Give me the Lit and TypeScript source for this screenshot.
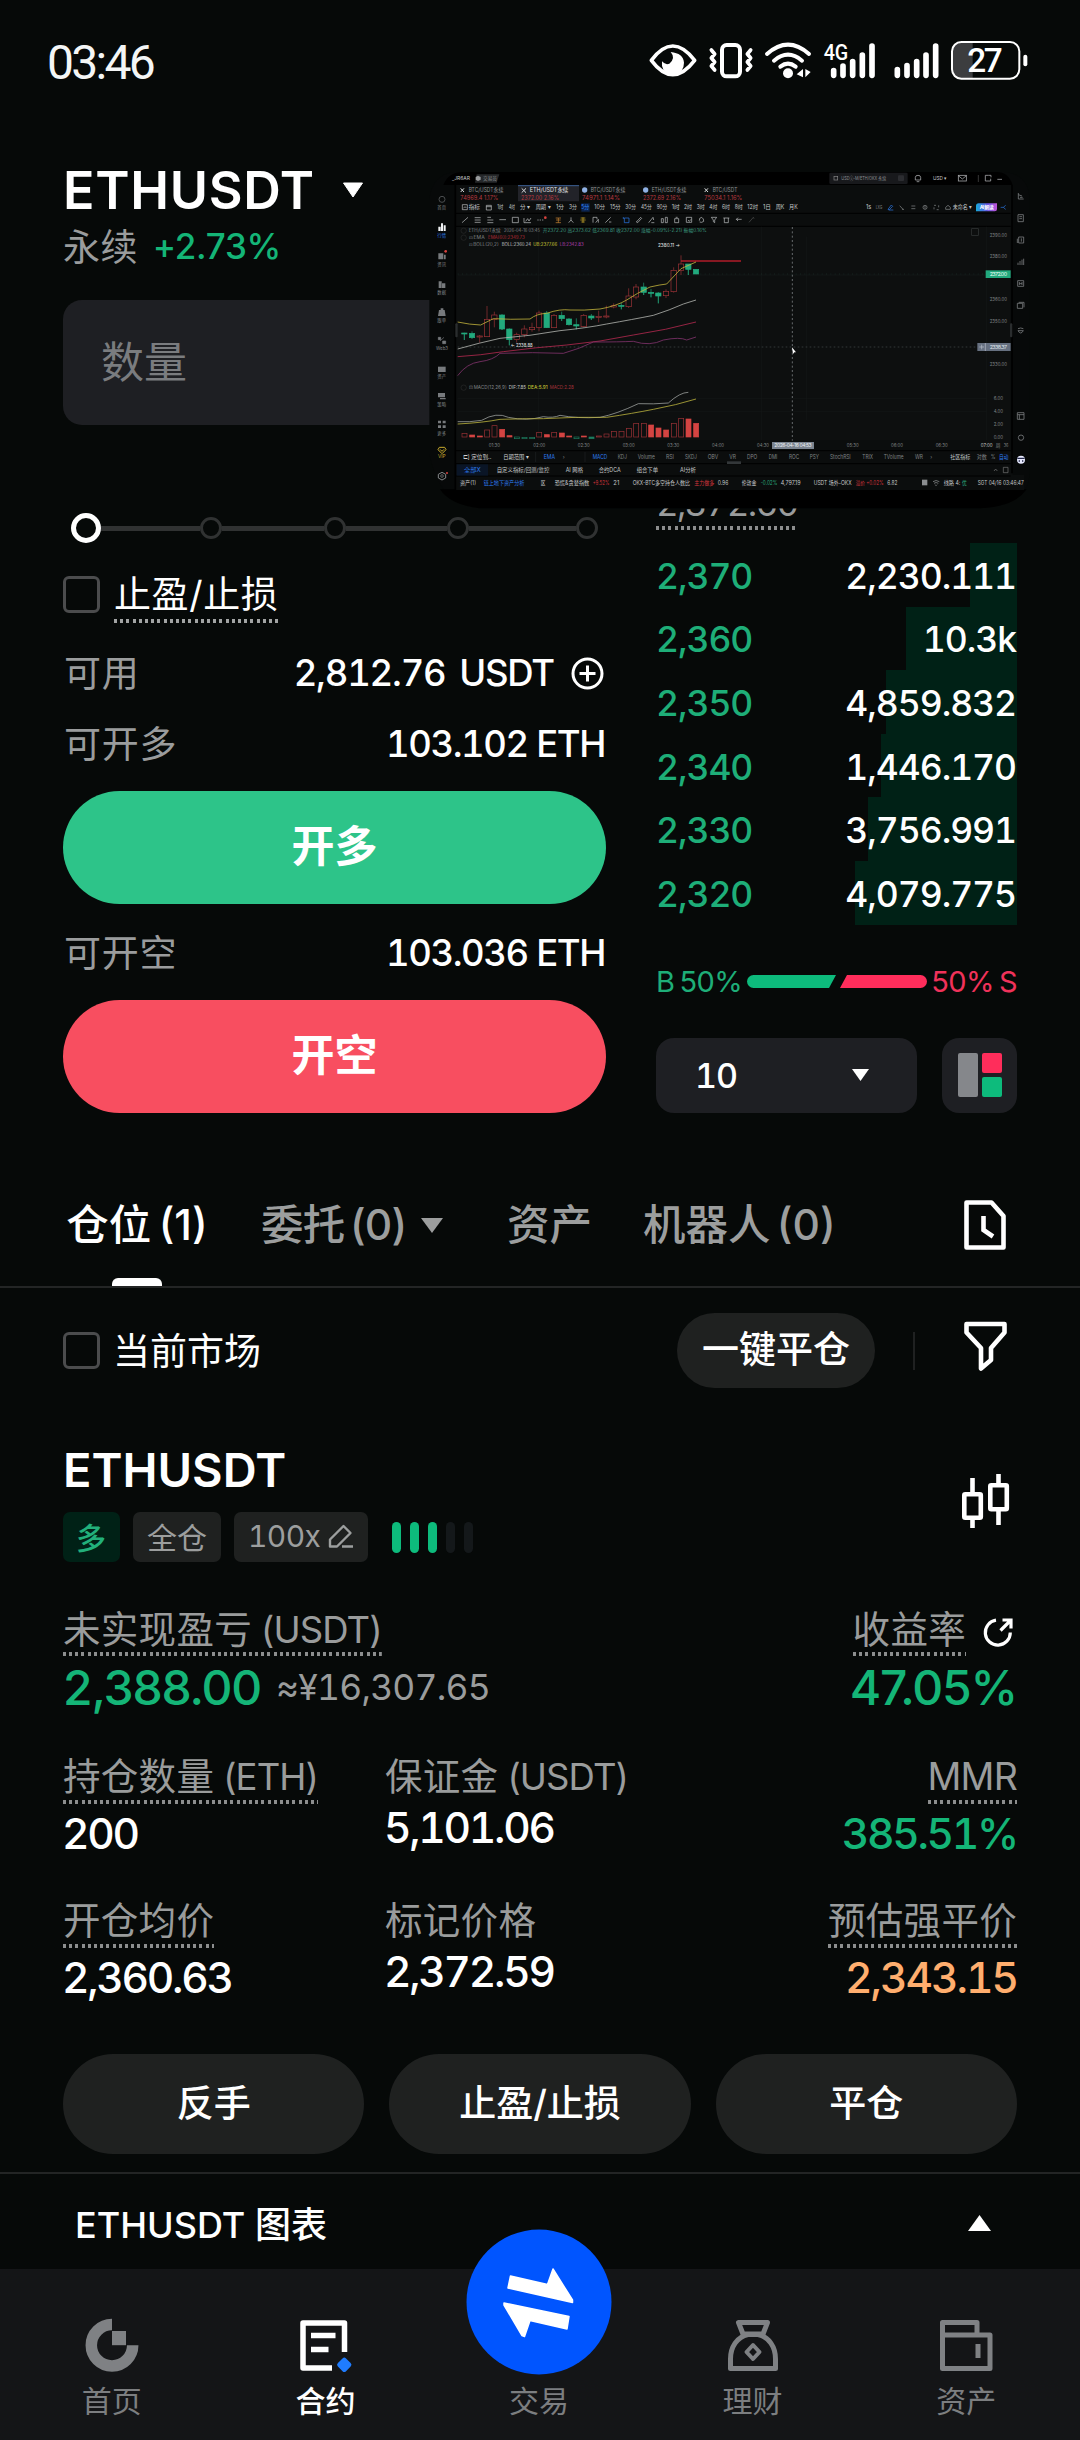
import { LitElement, html, css, svg } from "lit";
import { customElement, property } from "lit/decorators.js";

type Tiny = [number, number, string, string, number, number?];

/* Floating chart window: coordinates are in thirds of a pixel. */
const RED = "#b8383f";
const GREEN = "#2aa87c";
const GREY = "#808486";
const LIGHT = "#c4c7c8";
const BLUE = "#2c7cf0";

const TINY: Tiny[] = [
  [96, 55, "_JR6AR", LIGHT, 54, 15],
  [189, 55, "交易员", "#888b8d", 42, 15],
  [146, 91, "BTC/USDT永续", "#909394", 104],
  [329, 91, "ETH/USDT永续", "#e2e4e6", 116],
  [512, 91, "BTC/USDT永续", "#909394", 104],
  [695, 91, "ETH/USDT永续", "#909394", 104],
  [878, 91, "BTC/USDT", "#909394", 74],
  [121, 113, "74969.4 1.17%", RED, 114],
  [303, 113, "2372.00 2.16%", RED, 114],
  [486, 113, "74971.1 1.14%", RED, 114],
  [669, 113, "2372.69 2.16%", RED, 114],
  [853, 113, "75034.1 1.16%", RED, 114],
  [146, 142, "指标", LIGHT, 34],
  [232, 142, "1时", LIGHT, 18],
  [267, 142, "4时", LIGHT, 18],
  [300, 142, "分 ▾", LIGHT, 30],
  [347, 142, "周期 ▾", LIGHT, 44],
  [408, 142, "1分", LIGHT, 24],
  [447, 142, "3分", LIGHT, 24],
  [484, 142, "5分", "#2f86ff", 24],
  [523, 142, "10分", LIGHT, 32],
  [570, 142, "15分", LIGHT, 32],
  [616, 142, "30分", LIGHT, 32],
  [663, 142, "45分", LIGHT, 32],
  [710, 142, "90分", LIGHT, 32],
  [755, 142, "1时", LIGHT, 24],
  [792, 142, "2时", LIGHT, 24],
  [830, 142, "3时", LIGHT, 24],
  [868, 142, "4时", LIGHT, 24],
  [906, 142, "6时", LIGHT, 24],
  [944, 142, "8时", LIGHT, 24],
  [982, 142, "12时", LIGHT, 32],
  [1029, 142, "1日", LIGHT, 24],
  [1067, 142, "周K", LIGHT, 26],
  [1107, 142, "月K", LIGHT, 26],
  [1338, 142, "1s", LIGHT, 16],
  [1367, 142, "LXG", GREY, 20, 14],
  [1598, 142, "未命名 ▾", LIGHT, 58],
  [146, 212, "ETH/USDT永续", GREY, 96, 13],
  [252, 212, "2026-04-16 03:45", GREY, 108, 13],
  [368, 212, "开2372.20 高2373.62 低2369.81 收2372.00 涨幅-0.09%(-2.21) 振幅0.16%", "#3c9a80", 492, 13],
  [146, 233, "⊡ EMA", GREY, 48, 13],
  [204, 233, "EMA(60):2349.73", "#b02a34", 110, 13],
  [146, 254, "⊡ BOLL(20,2)", GREY, 90, 13],
  [245, 254, "BOLL:2360.24", LIGHT, 88, 13],
  [340, 254, "UB:2377.66", "#d3d038", 72, 13],
  [419, 254, "LB:2342.83", "#b13fb3", 72, 13],
  [714, 257, "2380.11 →", "#e4e6e6", 66, 15],
  [272, 556, "← 2338.88", "#e4e6e6", 66, 15],
  [146, 682, "⊡ MACD(12,26,9)", GREY, 114, 15],
  [266, 682, "DIF:7.85", LIGHT, 52, 15],
  [323, 682, "DEA:5.91", "#d3d038", 60, 15],
  [389, 682, "MACD:2.28", "#a3323a", 72, 15],
  [206, 856, "01:30", GREY, 34, 15],
  [340, 856, "02:00", GREY, 36, 15],
  [473, 856, "02:30", GREY, 36, 15],
  [608, 856, "03:00", GREY, 36, 15],
  [742, 856, "03:30", GREY, 36, 15],
  [876, 856, "04:00", GREY, 36, 15],
  [1011, 856, "04:30", GREY, 36, 15],
  [1280, 856, "05:30", GREY, 36, 15],
  [1413, 856, "06:00", GREY, 36, 15],
  [1547, 856, "06:30", GREY, 36, 15],
  [1682, 856, "07:00", LIGHT, 36, 15],
  [1727, 856, "周", GREY, 14, 14],
  [1751, 856, "36", GREY, 14, 14],
  [128, 890, "⊏] 定位到..", "#d0d2d3", 86],
  [250, 890, "日期范围 ▾", "#d0d2d3", 76],
  [371, 890, "EMA", BLUE, 34],
  [428, 890, "›", GREY, 6],
  [518, 890, "MACD", BLUE, 44],
  [593, 890, "KDJ", GREY, 28],
  [653, 890, "Volume", GREY, 52],
  [738, 890, "RSI", GREY, 24],
  [795, 890, "SKDJ", GREY, 36],
  [863, 890, "OBV", GREY, 32],
  [928, 890, "VR", GREY, 20],
  [981, 890, "DPO", GREY, 31],
  [1046, 890, "DMI", GREY, 26],
  [1107, 890, "ROC", GREY, 31],
  [1169, 890, "PSY", GREY, 28],
  [1230, 890, "StochRSI", GREY, 62],
  [1327, 890, "TRIX", GREY, 32],
  [1391, 890, "TVolume", GREY, 60],
  [1485, 890, "WR", GREY, 24],
  [1531, 890, "›", GREY, 6],
  [1591, 890, "社区指标", LIGHT, 60],
  [1670, 890, "对数", GREY, 30],
  [1712, 890, "%", GREY, 14],
  [1737, 890, "自动", BLUE, 28],
  [132, 930, "全部X", BLUE, 50],
  [230, 930, "自定义指标/回测/监控", LIGHT, 158],
  [437, 930, "AI 网格", LIGHT, 52],
  [536, 930, "合约DCA", LIGHT, 66],
  [650, 930, "组合下单", LIGHT, 64],
  [780, 930, "AI分析", LIGHT, 48],
  [120, 968, "资产(1)", LIGHT, 48],
  [191, 968, "链上地下资产分析", BLUE, 122],
  [362, 968, "区", LIGHT, 14],
  [404, 968, "恐慌&贪婪指数", LIGHT, 104],
  [518, 968, "+9.52%", "#d1343c", 50],
  [580, 968, "21", LIGHT, 18],
  [638, 968, "OKX-BTC多空持仓人数比", LIGHT, 172],
  [823, 968, "主力做多", "#d1343c", 60],
  [893, 968, "0.96", LIGHT, 32],
  [965, 968, "伦敦金", LIGHT, 44],
  [1022, 968, "-0.02%", GREEN, 50],
  [1082, 968, "4,797.19", LIGHT, 60],
  [1181, 968, "USDT 场外-OKX", LIGHT, 114],
  [1307, 968, "溢价 +0.02%", "#d1343c", 84],
  [1402, 968, "6.82", LIGHT, 30],
  [1571, 968, "线路 4:", LIGHT, 50],
  [1626, 968, "优", GREEN, 14],
  [1673, 968, "SGT 04/16 03:46:47", LIGHT, 138],
  [1264, 55, "USDⓢ-M/ETH/OKX 永续", "#8b8e91", 134, 15],
  [1539, 55, "USD ▾", LIGHT, 42, 15],
  [1709, 225, "2390.00", GREY, 52, 15],
  [1709, 290, "2380.00", GREY, 52, 15],
  [1709, 419, "2360.00", GREY, 52, 15],
  [1709, 485, "2350.00", GREY, 52, 15],
  [1709, 614, "2330.00", GREY, 52, 15],
  [1721, 715, "6.00", GREY, 28, 15],
  [1721, 754, "4.00", GREY, 28, 15],
  [1721, 793, "2.00", GREY, 28, 15],
  [1721, 831, "0.00", GREY, 28, 15],
  [52, 142, "首页", GREY, 26, 14],
  [52, 227, "行情", BLUE, 26, 14],
  [52, 312, "资讯", GREY, 26, 14],
  [52, 396, "数据", GREY, 26, 14],
  [52, 480, "跟单", GREY, 26, 14],
  [48, 565, "Web3", GREY, 36, 14],
  [52, 649, "资产", GREY, 26, 14],
  [52, 733, "策略", GREY, 26, 14],
  [52, 820, "更多", GREY, 26, 14],
  [54, 889, "VIP", "#c9ab2e", 23, 14],
];

/* x, wick top, wick bottom, body top, body bottom, up? */
const CANDLES: [number, number, number, number, number, boolean][] = [
  [133, 518, 540, 519, 521, false], [156, 514, 536, 520, 533, false],
  [179, 525, 548, 528, 530, true], [201, 438, 530, 478, 530, true],
  [223, 455, 502, 465, 478, true], [246, 462, 510, 465, 507, false],
  [268, 505, 556, 507, 539, false], [290, 518, 548, 524, 538, true],
  [313, 496, 532, 507, 524, true], [336, 488, 515, 502, 509, true],
  [357, 452, 514, 459, 502, true], [380, 453, 504, 459, 503, false],
  [402, 462, 504, 466, 503, true], [425, 455, 483, 466, 476, false],
  [447, 474, 496, 477, 494, false], [469, 475, 508, 494, 498, false],
  [491, 462, 502, 466, 500, true], [514, 462, 480, 468, 474, false],
  [536, 452, 487, 469, 472, true], [559, 437, 475, 468, 471, true],
  [581, 430, 445, 437, 441, true], [604, 428, 448, 436, 439, false],
  [626, 385, 444, 408, 440, true], [648, 372, 418, 381, 411, true],
  [671, 368, 405, 381, 397, false], [693, 387, 412, 397, 400, false],
  [715, 396, 430, 399, 408, false], [738, 388, 414, 394, 407, true],
  [761, 322, 398, 331, 395, true], [783, 286, 345, 312, 331, true],
  [805, 312, 345, 312, 328, false], [828, 327, 342, 328, 342, false],
];

/* x, top, filled, green */
const HIST: [number, number, boolean, boolean][] = [
  [133, 820, false, false], [156, 825, true, false], [179, 828, true, false],
  [201, 810, false, false], [223, 797, false, false], [246, 808, true, false],
  [268, 827, true, false], [290, 831, false, true], [313, 832, false, true],
  [336, 832, false, true], [357, 817, false, false], [380, 824, true, false],
  [402, 817, false, false], [425, 819, true, false], [447, 828, true, false],
  [469, 831, false, true], [491, 828, true, false], [514, 831, true, true],
  [536, 828, false, false], [559, 822, false, false], [581, 814, false, false],
  [604, 814, false, false], [626, 805, false, false], [648, 790, false, false],
  [671, 790, false, false], [693, 795, true, false], [715, 804, true, false],
  [738, 810, true, false], [761, 790, false, false], [783, 775, false, false],
  [805, 777, true, false], [828, 790, true, false],
];

@customElement("chart-window")
class ChartWindow extends LitElement {
  static styles = css`
    :host { display: block; }
    svg { display: block; font-family: Inter, "Noto Sans CJK SC", sans-serif; }
  `;

  render() {
    const tool = (x: number, d: string, c = LIGHT) =>
      svg`<path d=${d} transform="translate(${x} 180)" fill="none" stroke=${c} stroke-width="2"/>`;
    return html`<svg width="660" height="350" viewBox="0 0 1980 1050">
      <path d="M105 36H1750Q1828 42 1828 120V940Q1828 1045 1650 1045H180Q60 1040 28 880V120Q36 42 105 36Z" fill="#070909"/>
      <path d="M60 988H1820Q1780 1045 1660 1045H180Q90 1035 60 988Z" fill="#000"/>
      <path d="M70 75Q85 36 130 36H1730Q1765 36 1778 75Z" fill="#000"/>
      <path d="M108 75H1778V945H1812V990H108Z" fill="#0b0d0d"/>
      <path d="M108 200H1772V840H108Z" fill="#0d0f0f"/>
      <path d="M106 75V990M1776 75V940" stroke="#000" stroke-width="5"/>
      <path d="M108 160H1772M108 199H1772M108 872H1772M108 911H1772M108 948H1772" stroke="#000" stroke-width="3"/>
      <path d="M113 715H1700M113 754H1700M113 345H1696M1025 200V840M1160 230V780M355 200V840M1700 200V840" stroke="#151818" stroke-width="2"/>
      <path d="M170 43H238L230 68H165Z" fill="#26282a"/><path d="M174 47l8 4v8l-8 4-7-4v-8z" fill="#9a9c9e"/>
      <rect x="1228" y="38" width="235" height="34" rx="4" fill="#18191c"/>
      <rect x="1242" y="49" width="11" height="11" fill="none" stroke="#888" stroke-width="2"/>
      <rect x="1434" y="46" width="18" height="17" rx="3" fill="#2c2d31"/>
      <g fill="none" stroke="#a4a6a8" stroke-width="2.4">
        <path d="M1486 60V52Q1486 46 1494 46T1502 52V60ZM1490 65H1498"/>
        <rect x="1615" y="46" width="24" height="17"/><path d="M1615 47L1627 57L1639 47"/>
        <path d="M1675 45V66" stroke="#444"/>
        <path d="M1706 46H1696V63H1712V56M1706 46H1713V52"/><path d="M1732 58H1746"/>
      </g>
      <path d="M294 77H477V124H294Z" fill="#222329"/><path d="M294 77H477" stroke="#3c5f93" stroke-width="3"/>
      <g stroke="#d8dadc" stroke-width="3"><path d="M122 85L132 96M132 85L122 96M305 85L318 98M318 85L305 98M854 85L864 96M864 85L854 96"/></g>
      <circle cx="494" cy="90" r="8" fill="#8fb0e4"/><circle cx="677" cy="90" r="8" fill="#8fb0e4"/>
      <path d="M484 130H509V155H484Z" fill="#0c2550"/>
      <path d="M127 134H142V149H127ZM130 145L135 140L139 144M199 136H214V150H199ZM199 140H214" fill="none" stroke=${LIGHT} stroke-width="2"/>
      <g fill="none" stroke="#8d9091" stroke-width="2">
        <path d="M1404 148L1414 135L1418 139L1408 149ZM1406 150H1420" stroke=${BLUE}/>
        <path d="M1439 137L1449 148M1446 148H1452M1474 138H1486M1474 146H1486M1542 136H1548M1556 136V142M1542 148V142M1550 149H1556"/>
        <circle cx="1515" cy="142" r="6"/><path d="M1515 138V146M1577 142L1584 136L1591 142V148H1577Z"/>
        <path d="M1742 142H1750L1757 136M1750 142L1757 148" stroke=${BLUE}/>
      </g>
      <defs><linearGradient id="ai"><stop offset="0" stop-color="#17a9d8"/><stop offset=".55" stop-color="#6656e8"/><stop offset="1" stop-color="#c254d6"/></linearGradient></defs>
      <path d="M1676 130H1731V147Q1731 154 1724 154H1668V138Q1668 130 1676 130Z" fill="url(#ai)"/>
      <text x="1679" y="147" font-size="15" fill="#fff" font-weight="700" textLength="42">AI 解读</text>
      ${tool(135, "M-9 8L9 -8")}${tool(173, "M-9 -7H9M-9 0H9M-9 7H9")}
      ${tool(211, "M-9 -8H2M-9 0H9M-9 8H9")}${tool(248, "M-10 -1H10")}
      ${tool(286, "M-9 -8H9V8H-9Z")}${tool(323, "M-11 -6V8H10M-6 4L0 -4L4 3L10 -6")}
      ${tool(361, "M-9 0H-5M-2 0H2M5 0H9")}<circle cx="376" cy="173" r="4" fill="#d8433f"/>
      ${tool(415, "M-8 8H8M-7 0H7M-8 -6H8M0 -6V8", "#d08a34")}
      ${tool(453, "M0 -8V0L-7 8M0 0L7 8")}${tool(489, "M-7 -6H7M-8 0H8M-5 6H5M0 -8V8", "#d9b52d")}
      ${tool(527, "M-8 8V-8H4V-2M0 8L8 -2V8")}${tool(565, "M-9 8L7 -8M2 6H9")}
      ${tool(619, "M-6 -6H8V8H-6ZM-9 -9V-3", BLUE)}${tool(657, "M-8 6L5 -8L8 -5L-4 8Z")}
      ${tool(694, "M-8 8L5 -8L7 0M0 8H9")}${tool(733, "M-9 8V-4H-3V8ZM3 8V-8H9V8Z")}
      ${tool(770, "M-6 -4H6V8H-6ZM-3 -8H3")}${tool(807, "M-8 -8H8V7H-8ZM-3 0L1 4L6 -2")}
      ${tool(845, "M-7 2Q-8 -7 0 -8Q7 -4 6 4Q0 9 -6 6")}${tool(882, "M-8 -8H8L2 0V8L-2 5V0Z")}
      ${tool(919, "M-9 -6H9M-6 -6V8H6V-6")}${tool(957, "M-8 -2L-3 -7M-8 -2L-3 3M-8 -2H8")}
      ${tool(993, "M-6 7L7 -8L9 -4", "#555")}
      <circle cx="131" cy="212" r="8" fill="none" stroke="#444"/><circle cx="131" cy="233" r="8" fill="none" stroke="#444"/><circle cx="131" cy="683" r="8" fill="none" stroke="#444"/>
      <rect x="1655" y="206" width="20" height="20" fill="none" stroke="#35393a" stroke-width="2"/>
      <path d="M1117 201V842" stroke="#7c8284" stroke-width="2.4" stroke-dasharray="6 7"/>
      <path d="M113 561H1700" stroke="#3c4142" stroke-width="2.4" stroke-dasharray="5 7"/>
      <path d="M113 342H1696" stroke="#203a32" stroke-width="1.5" stroke-dasharray="3 10"/>
      <path d="M783 303H963" stroke="#b01c2a" stroke-width="4"/>
      ${CANDLES.map(([x, t, b, o, c, up]) => svg`
        <path d="M${x} ${t}V${up ? o : b}M${x} ${c}V${b}" stroke=${up ? "#a03338" : "#22a179"} stroke-width="2"/>
        <rect x=${x - 8} y=${o} width="16" height=${Math.max(3, c - o)} fill=${up ? "#0d0f0f" : "#22a97d"} stroke=${up ? "#a03338" : "#22a97d"} stroke-width="2"/>`)}
      ${HIST.map(([x, t, f, g]) => svg`
        <rect x=${x - 7} y=${t} width="15" height=${Math.max(3, (g ? 836 : 831) - t)} fill=${f ? (g ? "#1c7d5f" : "#d44442") : "none"} stroke=${g ? "#1c7d5f" : f ? "#d44442" : "#9e3236"} stroke-width="2"/>`)}
      <g fill="none" stroke-width="2.400">
        <path d="M113 486Q150 494 182 495L220 476Q270 479 330 477Q350 461 380 460Q420 446 450 450Q490 452 540 447Q590 438 620 420Q650 400 690 381Q720 374 740 372L783 326L828 306" stroke="#c4b53c"/>
        <path d="M113 567Q180 548 240 535Q330 528 420 512Q500 504 560 492Q640 478 700 466Q750 450 790 432L828 420" stroke="#b4b6b1"/>
        <path d="M113 590Q180 586 250 575Q350 562 440 555Q540 546 640 525Q740 510 828 486" stroke="#b82a50"/>
        <path d="M113 647Q140 610 180 605Q220 600 240 580Q340 576 430 580Q480 566 520 546Q600 546 640 544Q690 560 730 540Q780 530 800 540L828 531" stroke="#84336f"/>
        <path d="M113 785Q150 787 185 781Q230 755 265 772Q320 784 370 770Q400 775 420 766Q470 776 540 772Q590 762 655 731Q700 733 745 729Q780 697 805 697" stroke="#9b9e9c"/>
        <path d="M113 792Q190 788 240 778Q310 776 370 776Q470 770 560 772Q640 760 700 748Q770 735 828 717" stroke="#bdb43e"/>
      </g>
      <path d="M1697 331H1772V354H1697Z" fill="#22a97d"/><text x="1709" y="348" font-size="16" fill="#eafff6" textLength="52">2372.00</text>
      <path d="M1672 549H1772V573H1672Z" fill="#667080"/><path d="M1696 549V573M1678 561H1692M1685 554V568" stroke="#b9c0ca" stroke-width="2"/><text x="1709" y="567" font-size="16" fill="#dfe3ea" textLength="52">2338.37</text>
      <path d="M1056 846H1182V867H1056Z" fill="#7b8490"/><text x="1063" y="862" font-size="15" fill="#eef0f3" textLength="112">2026-04-16 04:53</text>
      <path d="M1116 562L1119 582L1123 577L1128 577Z" fill="#fff"/>
      <rect x="106" y="490" width="7" height="42" rx="3" fill="#2a2d2e"/><rect x="1770" y="490" width="7" height="42" rx="3" fill="#2a2d2e"/>
      <rect x="110" y="913" width="94" height="34" fill="#0a1526"/>
      <path d="M347 876V906M495 876V906" stroke="#202324" stroke-width="2"/><rect x="921" y="904" width="42" height="8" fill="#333739"/>
      <path d="M1506 959H1522V976H1506Z" fill="#8b8e90"/><path d="M1539 965Q1548 958 1558 965M1542 970Q1548 965 1555 970M1546 974L1548 977L1551 974" fill="none" stroke="#a0a3a5" stroke-width="2"/>
      <path d="M1722 933L1727 927L1732 933M1750 922H1764V938H1750Z" fill="none" stroke="#777" stroke-width="2"/>
      <g fill="#777a7d">
        <circle cx="66" cy="118" r="9" fill="none" stroke="#4a4d4f" stroke-width="3"/>
        <path d="M55 200H62V213H55ZM63 190H69V213H63ZM71 196H77V213H71Z" fill="#f0f2f4"/>
        <path d="M55 280H70V298H55ZM72 284H77V298H72Z"/><circle cx="77" cy="274" r="4" fill="#d8433f"/>
        <path d="M56 364H65V384H56ZM66 370H76V384H66Z"/><path d="M57 450H74L77 468H54ZM62 445H70V450H62Z"/>
        <path d="M55 532H62V539H55ZM68 543H77V551H68ZM60 543L72 532" stroke="#777a7d" stroke-width="2"/>
        <path d="M54 620H77V636H54Z"/><path d="M54 699H75V712H54ZM60 714H77V718H60Z"/>
        <path d="M54 782H63V790H54ZM68 782H77V790H68ZM54 796H63V804H54ZM68 796H77V804H68Z"/>
      </g>
      <path d="M58 862H74L78 869L66 881L54 869ZM60 868L66 874L72 868" fill="none" stroke="#c9ab2e" stroke-width="3"/>
      <path d="M66 937L77 943V954L66 960L55 954V943Z" fill="none" stroke="#85888a" stroke-width="3"/><circle cx="66" cy="948" r="4" fill="none" stroke="#85888a" stroke-width="2"/><circle cx="81" cy="939" r="3" fill="#d8433f"/>
      <g fill="none" stroke="#7b7e80" stroke-width="2.4" transform="translate(1802 0)">
        <path d="M-7 99V117H9M-7 104L4 108M-2 112H6"/><path d="M-8 164H8V185H-8ZM-4 170H4M-4 176H4"/>
        <path d="M-6 231H9V249H-6ZM-10 236V249M2 235V245"/><path d="M-8 315V308M-2 315V303M4 315V299M9 315V296"/>
        <path d="M-9 362H9V379H-9ZM-4 366V375M4 366V375M-4 371H4"/><path d="M-10 430H6V445H-10ZM-6 427H10V442"/>
        <path d="M-8 506Q0 502 8 506M-8 512Q0 526 8 512Z"/><path d="M-10 758H10V778H-10ZM-10 764H10M-4 764V778"/>
        <circle cx="1" cy="833" r="8"/>
      </g>
      <circle cx="1803" cy="899" r="12" fill="#e8eaff"/><path d="M1792 893H1814V897H1792ZM1796 901H1800V905H1796ZM1806 901H1810V905H1806Z" fill="#23284a"/>
      ${TINY.map(([x, y, t, c, w, s]) => svg`<text x=${x} y=${y + (s ?? 17) * 0.36} font-size=${s ?? 17} fill=${c} textLength=${w} lengthAdjust="spacingAndGlyphs">${t}</text>`)}
    </svg>`;
  }
}

@customElement("stat-cell")
class StatCell extends LitElement {
  @property() label = "";
  @property() unit = "";
  @property() value = "";
  @property() tone = "";
  @property({ type: Boolean }) dotted = false;
  @property({ type: Boolean }) end = false;
  static styles = css`
    :host { display: block; }
    .cell { display: flex; flex-direction: column; align-items: flex-start; }
    .end { align-items: flex-end; }
    .label { font-size: 37.5px; line-height: 41px; height: 43px; color: #9a9c9c; letter-spacing: 0.3px; white-space: nowrap; }
    .label span { font-size: 36.5px; letter-spacing: -0.9px; margin-left: 9px; }
    .dotted { height: 48px; margin-bottom: 1px; background: repeating-linear-gradient(90deg, #8c8e8e 0 3px, transparent 3px 6.2px) bottom / 100% 4px no-repeat; }
    .latin { letter-spacing: -0.8px; }
    .value { margin-top: 6px; font-size: 42.5px; line-height: 45px; font-weight: 500; color: #fff; letter-spacing: -2.3px; font-variant-numeric: tabular-nums; margin-left: -1px; }
    .up { color: #14b577; }
    .warn { color: #ffae6e; letter-spacing: -2px; }
  `;
  render() {
    const latin = /^[A-Z]+$/.test(this.label);
    return html`<div class="cell ${this.end ? "end" : ""}">
      <div class="label ${this.dotted ? "dotted" : ""} ${latin ? "latin" : ""}">${this.label}${this.unit ? html`<span>${this.unit}</span>` : ""}</div>
      <div class="value ${this.tone}">${this.value}</div>
    </div>`;
  }
}

const BOOK = [
  { price: "2,370", size: "2,230.111", depth: 47 },
  { price: "2,360", size: "10.3k", depth: 111 },
  { price: "2,350", size: "4,859.832", depth: 131 },
  { price: "2,340", size: "1,446.170", depth: 136 },
  { price: "2,330", size: "3,756.991", depth: 149 },
  { price: "2,320", size: "4,079.775", depth: 162 },
];

@customElement("app-root")
class AppRoot extends LitElement {
  static styles = css`
    :host {
      display: block; position: relative; box-sizing: border-box;
      width: 1080px; height: 2440px; overflow: hidden;
      background: #060908; color: #fff;
      font-family: Inter, "Noto Sans CJK SC", sans-serif;
    }
    * { box-sizing: border-box; }
    svg { display: block; flex: none; }
    .row { display: flex; align-items: center; justify-content: space-between; }
    .page { display: flex; flex-direction: column; height: 2440px; white-space: nowrap; }
    .status { height: 160px; padding: 30px 40px 0 47px; display: flex; align-items: flex-start; justify-content: space-between; }
    .clock { font: 400 48px/65px Roboto, sans-serif; letter-spacing: -2.7px; color: #f4f6f6; }
    .status svg { font-family: Roboto, sans-serif; }
    .trade { display: grid; grid-template-columns: 543px 361px; column-gap: 50px; padding-left: 63px; height: 953px; }
    .col { display: flex; flex-direction: column; }
    .pair { display: flex; align-items: center; gap: 27px; height: 60px; font-size: 52px; font-weight: 600; letter-spacing: 0.7px; }
    .sub { display: flex; align-items: center; gap: 15px; height: 44px; margin-top: 4px; font-size: 37px; color: #9a9c9d; letter-spacing: 0.4px; }
    .sub span:first-child { margin-top: -2px; }
    .chg { font-size: 35px; color: #14b577; letter-spacing: -0.3px; font-weight: 450; }
    .qty { height: 125px; margin-top: 32px; border-radius: 19px; background: #1e1f23; padding-left: 38px; font-size: 43px; line-height: 124px; color: #7a7c7f; }
    .slider { height: 30px; margin: 88px 8px 0 8px; display: flex; align-items: center; }
    .knob { flex: none; width: 22px; height: 22px; border: 3px solid #303232; border-radius: 50%; }
    .knob.on { width: 30px; height: 30px; border: 5px solid #fff; }
    .rail { flex: none; width: 101.5px; height: 5px; background: #303232; }
    .rail.first { width: 99px; }
    .rail.last { flex: 1; }
    .check { display: flex; align-items: center; gap: 13px; font-size: 37px; }
    .check span { position: relative; top: -2px; }
    .check.tp { height: 47px; margin-top: 33px; align-items: flex-start; }
    .box { width: 37px; height: 37px; border: 3px solid #4b4c4d; border-radius: 6px; }
    .tplabel { line-height: 38px; height: 47px; background: repeating-linear-gradient(90deg, #a2a4a4 0 3px, transparent 3px 6.2px) bottom / 100% 4px no-repeat; letter-spacing: 0.6px; margin-left: 1px; }
    .line { height: 40px; font-size: 36.5px; font-weight: 500; letter-spacing: -1.4px; font-variant-numeric: tabular-nums; }
    .line .k { font-size: 37px; font-weight: 400; color: #9a9c9d; letter-spacing: 0.8px; margin-top: -5px; margin-left: 1px; }
    .line .v { display: flex; align-items: center; letter-spacing: -1.2px; word-spacing: 5px; }
    .line.a { margin-top: 30px; }
    .line.b { margin-top: 31px; padding-right: 1px; }
    .line.c { margin-top: 29px; padding-right: 1px; }
    .v svg { margin-left: 17px; margin-right: 2px; }
    .cta { height: 113px; border-radius: 57px; text-align: center; font-size: 43px; line-height: 111px; font-weight: 600; }
    .long { background: #2dc489; margin-top: 27px; }
    .short { background: #f84e60; margin-top: 27px; }
    .book { padding-top: 323px; }
    .mark { align-self: flex-start; font-size: 35px; line-height: 40px; height: 47px; width: 141px; color: #9a9c9c; letter-spacing: -1.7px; background: repeating-linear-gradient(90deg, #8c8e8e 0 3px, transparent 3px 6.2px) bottom / 100% 4px no-repeat; font-variant-numeric: tabular-nums; }
    .levels { margin-top: 13px; }
    .level { position: relative; height: 63.6px; padding: 3px 1px 0 0; font-size: 35.5px; font-weight: 450; font-variant-numeric: tabular-nums; letter-spacing: -1.05px; }
    .level .p { color: #1eae78; }
    .level .s { position: relative; }
    .depth { position: absolute; right: 0; top: 0; bottom: 0; background: #002116; }
    .ratio { height: 40px; margin-top: 37px; font-size: 29px; color: #1eae78; letter-spacing: -0.6px; word-spacing: -2.5px; }
    .ratio span { width: 86px; }
    .ratio .sell { color: #f0325a; text-align: right; }
    .picker { margin-top: 36px; height: 75px; }
    .dd { width: 261px; height: 75px; border-radius: 18px; background: #1e1f23; padding: 0 48px 0 39px; font-size: 34px; font-weight: 500; font-variant-numeric: tabular-nums; letter-spacing: -1px; }
    .mode { width: 75px; height: 75px; border-radius: 17px; background: #1e1f23; display: flex; align-items: center; justify-content: center; }
    .tabs { height: 175px; padding: 81px 73px 0 63px; border-bottom: 2px solid #232525; display: flex; align-items: flex-start; font-size: 42.5px; color: #9c9e9e; font-weight: 500; word-spacing: -5px; }
    .tab { display: flex; flex-direction: column; align-items: center; line-height: 61px; }
    .tab.on { color: #fff; width: 148px; word-spacing: -4px; }
    .tab.on i { width: 50px; height: 8px; margin-top: 23px; border-radius: 6px 6px 0 0; background: #fff; }
    .tab.ord { flex-direction: row; margin-left: 50px; width: 182px; justify-content: space-between; letter-spacing: -0.8px; }
    .tab.ord svg { margin: 2px 0 0; }
    .tab.ast { margin-left: 64px; }
    .tab.bot { margin-left: 51px; }
    .tabs .hist { margin: 4px 0 0 auto; }
    .filters { height: 125px; padding: 0 73px 0 63px; display: flex; align-items: center; }
    .filters .check { height: 37px; }
    .filters .fun { margin-top: -8px; }
    .pill { margin-left: auto; width: 198px; height: 75px; border-radius: 38px; background: #1f2120; text-align: center; font-size: 37px; line-height: 74px; font-weight: 500; }
    .sep { width: 2px; height: 38px; margin: 0 49px 0 38px; background: #1f2121; }
    .pos { padding: 0 63px; height: 759px; }
    .name { height: 60px; line-height: 60px; font-size: 47px; font-weight: 600; }
    .head svg.k { margin-top: 34px; margin-right: 7px; }
    .head { align-items: flex-start; height: 118px; margin-top: 27px; }
    .tags { display: flex; align-items: center; gap: 13px; height: 50px; margin-top: 12px; }
    .tag { display: flex; align-items: center; height: 50px; padding: 0 14px; gap: 8px; border-radius: 7px; background: #1f2120; color: #9c9e9e; font-size: 30px; padding-bottom: 2px; }
    .tag.lev { width: 134px; justify-content: space-between; font-variant-numeric: tabular-nums; letter-spacing: -0.6px; }
    .tag.g { background: #002116; color: #22b07b; padding-left: 13px; font-weight: 500; }
    .bars { display: flex; gap: 9px; margin-left: 11px; }
    .bars i { width: 9px; height: 31px; border-radius: 5px; background: #14181a; }
    .bars i.f { background: #0dbb7c; }
    .pnl { height: 105px; margin-top: 52px; align-items: flex-start; }
    .lab { font-size: 37.5px; line-height: 40px; height: 46px; margin-bottom: 1px; color: #9a9c9c; background: repeating-linear-gradient(90deg, #8c8e8e 0 3px, transparent 3px 6.2px) bottom / 100% 4px no-repeat; letter-spacing: 0.3px; }
    .lab span { font-size: 36.5px; letter-spacing: -0.9px; margin-left: 9px; }
    .big { display: flex; align-items: center; gap: 15px; height: 60px; font-size: 48px; font-weight: 500; color: #14b577; letter-spacing: -1.2px; }
    .big small { font-size: 35.5px; font-weight: 400; color: #9a9c9c; letter-spacing: -0.8px; font-variant-numeric: tabular-nums; }
    .left { display: flex; flex-direction: column; align-items: flex-start; }
    .right { display: flex; flex-direction: column; align-items: flex-end; }
    .rl { display: flex; gap: 17px; }
    .rl svg { margin: 6px 3px 0 0; }
    .grid { display: grid; grid-template-columns: 322px 1fr auto; grid-auto-rows: 144px; margin-top: 41px; }
    .acts { display: grid; grid-template-columns: repeat(3, 1fr); gap: 25px; margin-top: 10px; }
    .act { height: 100px; border-radius: 50px; background: #1f2120; text-align: center; font-size: 37px; line-height: 100px; font-weight: 500; }
    .fold { height: 97px; border-top: 2px solid #232525; padding: 10px 89px 0 75px; align-items: flex-start; font-size: 36px; font-weight: 500; line-height: 83px; }
    .fold svg { margin-top: 31px; }
    .nav { flex: 1; background: #141517; display: grid; grid-template-columns: repeat(5, 1fr); padding: 0 7px 0 5px; color: #7c7e80; font-size: 30px; }
    .item { display: flex; flex-direction: column; align-items: center; padding-top: 46px; line-height: 40px; }
    .item svg { margin-bottom: 5px; }
    .item.on { color: #fff; font-weight: 500; }
    .item.mid { padding-top: 0; }
    .item.mid svg { margin: -40px 0 6px; }
    chart-window { position: absolute; left: 420px; top: 160px; }
  `;

  private bars = [1, 1, 1, 0, 0];

  render() {
    return html`<div class="page">
      <div class="status">
        <div class="clock">03:46</div>
        <svg width="400" height="60" viewBox="0 0 1200 180" fill="none" stroke="#fff" stroke-linecap="round">
          <path d="M34 91Q98 5 164 91Q98 177 34 91Z" stroke-width="11" stroke-linejoin="round"/>
          <path d="M92 66Q108 84 88 101Q76 106 66 94Q62 126 92 134H106Q132 124 132 98Q130 70 92 66Z" fill="#fff" stroke="none"/>
          <rect x="246" y="45" width="54" height="94" rx="14" stroke-width="12"/>
          <path d="M214 60l10 12-10 12 10 12-10 12 10 12M332 60l-10 12 10 12-10 12 10 12-10 12" stroke-width="11" stroke-linejoin="round"/>
          <path d="M381 72Q444 16 507 72M402 92Q444 56 486 92M421 110Q444 92 467 110" stroke-width="12"/>
          <circle cx="444" cy="130" r="15" fill="#fff" stroke="none"/>
          <path d="M489 117V142L470 133ZM496 117L512 126L496 142Z" fill="#fff" stroke="none"/>
          <text x="551" y="89" font-size="66" font-weight="500" fill="#fff" stroke="none" textLength="74" lengthAdjust="spacingAndGlyphs">4G</text>
          <path d="M581 122V136M609 108V136M638 95V136M667 75V136M696 48V136M772 119V136M801 107V136M830 95V136M858 75V136M887 48V136" stroke-width="17"/>
          <path d="M955 38H998V146H955Q939 144 939 126V58Q939 40 955 38Z" fill="#3c3d3f" stroke="none"/>
          <rect x="936" y="36" width="202" height="110" rx="28" stroke-width="6"/>
          <path d="M1156 80V103" stroke-width="12"/>
          <text x="982" y="126" font-size="100" font-weight="500" fill="#fff" stroke="none" textLength="106">27</text>
        </svg>
      </div>

      <div class="trade">
        <div class="col">
          <div class="pair">ETHUSDT<svg width="22" height="16" viewBox="0 0 22 16"><path d="M1.500 1H20.500L11 15Z" fill="#fff" stroke="#fff" stroke-linejoin="round"/></svg></div>
          <div class="sub"><span>永续</span><span class="chg">+2.73%</span></div>
          <div class="qty">数量</div>
          <div class="slider">
            <div class="knob on"></div><div class="rail first"></div>
            <div class="knob"></div><div class="rail"></div>
            <div class="knob"></div><div class="rail"></div>
            <div class="knob"></div><div class="rail last"></div>
            <div class="knob"></div>
          </div>
          <div class="check tp"><div class="box"></div><div class="tplabel">止盈/止损</div></div>
          <div class="row line a"><span class="k">可用</span><span class="v">2,812.76 USDT
            <svg width="33" height="33" viewBox="0 0 33 33" fill="none" stroke="#fff" stroke-width="3"><circle cx="16.500" cy="16.500" r="14.500"/><path d="M16.500 8.500V24.500M8.500 16.500H24.500"/></svg></span></div>
          <div class="row line b"><span class="k">可开多</span><span>103.102 ETH</span></div>
          <div class="cta long">开多</div>
          <div class="row line c"><span class="k">可开空</span><span>103.036 ETH</span></div>
          <div class="cta short">开空</div>
        </div>

        <div class="col book">
          <div class="mark">2,372.60</div>
          <div class="levels">
            ${BOOK.map((l) => html`<div class="row level">
              <div class="depth" style="width:${l.depth}px"></div>
              <span class="p">${l.price}</span><span class="s">${l.size}</span>
            </div>`)}
          </div>
          <div class="row ratio"><span>B 50%</span>
            <svg width="180" height="13" viewBox="0 0 180 13"><path d="M6.500 0H89L82 13H6.500A6.500 6.500 0 0 1 6.500 0Z" fill="#0dbb7c"/><path d="M100 0H173.500A6.500 6.500 0 0 1 173.500 13H93Z" fill="#ff2d5b"/></svg>
            <span class="sell">50% S</span></div>
          <div class="row picker">
            <div class="row dd">10<svg width="17" height="12" viewBox="0 0 17 12"><path d="M0 0H17L8.500 12Z" fill="#fff"/></svg></div>
            <div class="mode"><svg width="44" height="44" viewBox="0 0 44 44"><rect width="20" height="44" rx="2" fill="#85878b"/><rect x="24" width="20" height="20" rx="2" fill="#ff2d5b"/><rect x="24" y="24" width="20" height="20" rx="2" fill="#0dbb7c"/></svg></div>
          </div>
        </div>
      </div>

      <div class="tabs">
        <div class="tab on">仓位 (1)<i></i></div>
        <div class="tab ord">委托 (0)<svg width="22" height="15" viewBox="0 0 22 15"><path d="M0 0H22L11 15Z" fill="#9c9e9e"/></svg></div>
        <div class="tab ast">资产</div>
        <div class="tab bot">机器人 (0)</div>
        <svg class="hist" width="44" height="54" viewBox="0 0 44 54" fill="none" stroke="#fff" stroke-width="4.600"><path d="M3.500 4.500H28.500L40.500 18V49.500H3.500Z" stroke-linejoin="round"/><path d="M20.500 18V32L30 38.500"/></svg>
      </div>

      <div class="filters">
        <div class="check"><div class="box"></div><span>当前市场</span></div>
        <div class="pill">一键平仓</div>
        <div class="sep"></div>
        <svg class="fun" width="43" height="51" viewBox="0 0 43 51" fill="none" stroke="#fff" stroke-width="4.600" stroke-linejoin="round"><path d="M2.500 3H40.500V11.500L27 27V39L17 47.500V27L2.500 11.500Z"/></svg>
      </div>

      <div class="pos">
        <div class="row head">
          <div class="left">
            <div class="name">ETHUSDT</div>
            <div class="tags">
              <div class="tag g">多</div><div class="tag">全仓</div>
              <div class="tag lev">100x<svg width="26" height="26" viewBox="0 0 26 26" fill="none" stroke="#9c9e9e" stroke-width="2.400" stroke-linejoin="round"><path d="M2 23.500V16.500L15.500 3L22.500 10L9 23.500ZM14 23.500H25"/></svg></div>
              <div class="bars">${this.bars.map((b) => html`<i class=${b ? "f" : ""}></i>`)}</div>
            </div>
          </div>
          <svg class="k" width="49" height="54" viewBox="0 0 49 54" fill="none" stroke="#fff" stroke-width="4.600"><path d="M11.500 4V19M11.500 45V54M37.500 0V11M37.500 36V51"/><rect x="3.300" y="20.300" width="16.500" height="23.500" rx="1"/><rect x="29.300" y="11.300" width="16.500" height="24" rx="1"/></svg>
        </div>
        <div class="row pnl">
          <div class="left"><div class="lab">未实现盈亏<span>(USDT)</span></div><div class="big">2,388.00<small>≈¥16,307.65</small></div></div>
          <div class="right">
            <div class="rl"><div class="lab">收益率</div>
              <svg width="31" height="32" viewBox="0 0 31 32" fill="none" stroke="#fff" stroke-width="3.200"><path d="M13 4.200A12.500 12.500 0 1 0 27.300 16.500M17.500 14.500L27 5M19.500 4H28V12.500"/></svg></div>
            <div class="big">47.05%</div>
          </div>
        </div>
        <div class="grid">
          <stat-cell dotted label="持仓数量" unit="(ETH)" value="200"></stat-cell>
          <stat-cell label="保证金" unit="(USDT)" value="5,101.06"></stat-cell>
          <stat-cell dotted end label="MMR" value="385.51%" tone="up"></stat-cell>
          <stat-cell dotted label="开仓均价" value="2,360.63"></stat-cell>
          <stat-cell label="标记价格" value="2,372.59"></stat-cell>
          <stat-cell dotted end label="预估强平价" value="2,343.15" tone="warn"></stat-cell>
        </div>
        <div class="acts"><div class="act">反手</div><div class="act">止盈/止损</div><div class="act">平仓</div></div>
      </div>

      <div class="row fold"><span>ETHUSDT 图表</span><svg width="23" height="16" viewBox="0 0 23 16"><path d="M0 16H23L11.500 0Z" fill="#fff"/></svg></div>

      <div class="nav">
        <div class="item"><svg width="60" height="61" viewBox="0 0 60 61"><path d="M30 9.500A20.700 20.700 0 1 0 50.700 30.200" fill="none" stroke="#7f8184" stroke-width="11.500"/><path d="M30 16H44V30.200H30Z" fill="#7f8184"/></svg>首页</div>
        <div class="item on"><svg width="60" height="61" viewBox="0 0 60 61" fill="none" stroke="#fff" stroke-width="5.500"><path d="M49.500 37V8H8V53H37" stroke-linejoin="round"/><path d="M16 20.500H40.500M16 34.500H33.500"/><rect x="43.500" y="44" width="11.500" height="11.500" rx="2.500" transform="rotate(45 49.200 49.800)" fill="#1f7cff" stroke="none"/></svg>合约</div>
        <div class="item mid"><svg width="146" height="146" viewBox="0 0 146 146"><circle cx="73" cy="73" r="72.500" fill="#0055ff"/><path d="M44.500 47L81.500 55.500L87 40L106.500 71V73.500L42 59ZM38 74L103 87.500L101 100L64 91.500L58.500 107.500L56 106.500L38 76Z" fill="#fff" stroke="#fff" stroke-width="1.500" stroke-linejoin="round"/></svg>交易</div>
        <div class="item"><svg width="60" height="61" viewBox="0 0 60 61" fill="none" stroke="#7f8184" stroke-width="5" stroke-linejoin="round"><path d="M15.500 7.500H44.500L40 19H20Z"/><path d="M25 19.500C14 22 7.500 32 7.500 44V53.500H52.500V44C52.500 32 46 22 35 19.500Z"/><path d="M30 30L36.500 37L30 44L23.500 37Z" stroke-width="4"/></svg>理财</div>
        <div class="item"><svg width="60" height="61" viewBox="0 0 60 61" fill="none" stroke="#7f8184" stroke-width="5" stroke-linejoin="round"><path d="M6.500 20V7.500H41V20M6.500 20H54V53.500H6.500ZM42 29V43"/></svg>资产</div>
      </div>
    </div>
    <chart-window></chart-window>`;
  }
}
